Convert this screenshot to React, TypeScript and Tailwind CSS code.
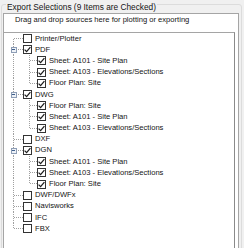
import React from 'react';

type Node = {
  label: string;
  checked?: boolean;
  children?: string[];
};

type Row = {
  label: string;
  checked: boolean;
  level: 0 | 1;
  first: boolean;
  last: boolean;
  expander: boolean;
  lastChild: boolean;
};

const tree: Node[] = [
  { label: 'Printer/Plotter' },
  {
    label: 'PDF',
    checked: true,
    children: ['Sheet: A101 - Site Plan', 'Sheet: A103 - Elevations/Sections', 'Floor Plan: Site'],
  },
  {
    label: 'DWG',
    checked: true,
    children: ['Floor Plan: Site', 'Sheet: A101 - Site Plan', 'Sheet: A103 - Elevations/Sections'],
  },
  { label: 'DXF' },
  {
    label: 'DGN',
    checked: true,
    children: ['Sheet: A101 - Site Plan', 'Sheet: A103 - Elevations/Sections', 'Floor Plan: Site'],
  },
  { label: 'DWF/DWFx' },
  { label: 'Navisworks' },
  { label: 'IFC' },
  { label: 'FBX' },
];

const flatten = (nodes: Node[]): Row[] => {
  const rows: Row[] = [];
  nodes.forEach((n, i) => {
    rows.push({
      label: n.label,
      checked: !!n.checked,
      level: 0,
      first: i === 0,
      last: i === nodes.length - 1,
      expander: !!n.children,
      lastChild: false,
    });
    (n.children || []).forEach((c, j, arr) => {
      rows.push({
        label: c,
        checked: !!n.checked,
        level: 1,
        first: false,
        last: false,
        expander: false,
        lastChild: j === arr.length - 1,
      });
    });
  });
  return rows;
};

const H = 11.2;
const LINE = '#a0a0a0';

// dotted connector lines + expander box for one tree row
const Lines = ({ row }: { row: Row }) => {
  const cy = H / 2;
  const w = row.level === 0 ? 19 : 33;
  return (
    <svg width={w} height={H} className="shrink-0" shapeRendering="crispEdges">
      <line
        x1={9.5}
        x2={9.5}
        y1={row.level === 0 && row.first ? cy : 0}
        y2={row.level === 0 && row.last ? cy : H}
        stroke={LINE}
        strokeDasharray="1 1"
      />
      {row.level === 0 && (
        <line x1={10} x2={19} y1={cy} y2={cy} stroke={LINE} strokeDasharray="1 1" />
      )}
      {row.level === 0 && row.expander && (
        <>
          <line x1={25.5} x2={25.5} y1={cy + 5} y2={H} stroke={LINE} strokeDasharray="1 1" />
          <rect x={7} y={cy - 2.5} width={5} height={5} fill="#eef2f8" stroke="#8d9db5" />
          <line x1={8} x2={11} y1={cy} y2={cy} stroke="#3f5f8c" />
        </>
      )}
      {row.level === 1 && (
        <>
          <line
            x1={25.5}
            x2={25.5}
            y1={0}
            y2={row.lastChild ? cy : H}
            stroke={LINE}
            strokeDasharray="1 1"
          />
          <line x1={26} x2={33} y1={cy} y2={cy} stroke={LINE} strokeDasharray="1 1" />
        </>
      )}
    </svg>
  );
};

const CheckBox = ({ checked }: { checked: boolean }) => (
  <div className="w-[9px] h-[9px] shrink-0 border border-[#333333] bg-white flex items-center justify-center">
    {checked && (
      <svg width="7" height="7" viewBox="0 0 7 7">
        <path d="M0.6 3.6 L2.6 5.6 L6.4 1.2" fill="none" stroke="#1e1e1e" strokeWidth="1.3" />
      </svg>
    )}
  </div>
);

const TreeRow = ({ row }: { row: Row }) => (
  <div className="flex items-center h-[11.2px]">
    <Lines row={row} />
    <CheckBox checked={row.checked} />
    <span className="ml-[3px] whitespace-nowrap">{row.label}</span>
  </div>
);

const App = () => {
  const rows = flatten(tree);

  return (
    <div
      className="w-[244px] h-[248px] overflow-hidden bg-[#f0f0f0] pt-[2px] pl-[1px] text-[#141414]"
      style={{ fontFamily: '"Liberation Sans", Arial, sans-serif' }}
    >
      <div className="relative z-10 ml-[5px] w-fit bg-[#f0f0f0] px-[1px] text-[8.3px] leading-[10px]">
        Export Selections (9 Items are Checked)
      </div>
      <div className="-mt-[8px] w-[241px] h-[260px] border border-[#dcdcdc] rounded-[3px] pl-[1px] pt-[8px]">
        <div className="w-[236px] h-full border-l border-t border-r border-[#a5a5a5] bg-white text-[7.6px] leading-[10px]">
          <div className="h-[18px] pl-[11px] pt-[1px]">
            Drag and drop sources here for plotting or exporting
          </div>
          <div className="w-[231px] h-full border-t border-r border-t-[#a5a5a5] border-r-[#8a8a8a]">
            {rows.map((r, i) => (
              <TreeRow key={i} row={r} />
            ))}
          </div>
        </div>
      </div>
    </div>
  );
};

export default App;
